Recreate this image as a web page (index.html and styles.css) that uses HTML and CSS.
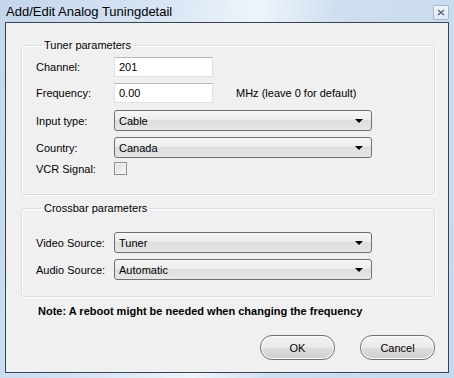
FILE: index.html
```html
<!DOCTYPE html>
<html lang="en">
<head>
    <meta charset="UTF-8">
    <title>Add/Edit Analog Tuningdetail</title>
    <link rel="stylesheet" href="styles.css">
</head>
<body>
    <div class="window">
        <div class="titlebar">
            <span class="title">Add/Edit Analog Tuningdetail</span>
            <span class="close-btn">
                <svg width="8" height="7" viewBox="0 0 8 7">
                    <path d="M1 1 L7 6 M7 1 L1 6" stroke="#5a6b80" stroke-width="1.6" fill="none"/>
                </svg>
            </span>
        </div>

        <div class="client">
            <fieldset class="group group-tuner">
                <legend>Tuner parameters</legend>
                <div class="row">
                    <label>Channel:</label>
                    <div class="textbox">201</div>
                </div>
                <div class="row">
                    <label>Frequency:</label>
                    <div class="textbox">0.00</div>
                    <span class="hint">MHz (leave 0 for default)</span>
                </div>
                <div class="row row-select first-select">
                    <label>Input type:</label>
                    <div class="select">Cable<span class="arrow"></span></div>
                </div>
                <div class="row row-select">
                    <label>Country:</label>
                    <div class="select">Canada<span class="arrow"></span></div>
                </div>
                <div class="row row-check">
                    <label>VCR Signal:</label>
                    <span class="checkbox"></span>
                </div>
            </fieldset>

            <fieldset class="group group-crossbar">
                <legend>Crossbar parameters</legend>
                <div class="row row-select">
                    <label>Video Source:</label>
                    <div class="select">Tuner<span class="arrow"></span></div>
                </div>
                <div class="row row-select">
                    <label>Audio Source:</label>
                    <div class="select">Automatic<span class="arrow"></span></div>
                </div>
            </fieldset>

            <p class="note">Note: A reboot might be needed when changing the frequency</p>

            <div class="buttons">
                <button class="btn">OK</button>
                <button class="btn">Cancel</button>
            </div>
        </div>
    </div>
</body>
</html>
```

FILE: styles.css
```css
* {
    margin: 0;
    padding: 0;
    box-sizing: border-box;
}

body {
    font-family: "Liberation Sans", Arial, sans-serif;
    font-size: 11px;
    color: #000;
    background: #fff;
}

.window {
    width: 454px;
    height: 378px;
    padding: 0 5px 5px 5px;
    background: linear-gradient(100deg, #c3d6ec 0%, #d6e4f3 30%, #eef4fa 50%, #cfdff0 65%, #c6d9ee 100%);
}

.titlebar {
    height: 22px;
    display: flex;
    align-items: center;
    justify-content: space-between;
}

.title {
    font-size: 13px;
    color: #000;
    padding-left: 1px;
    padding-top: 1px;
}

.close-btn {
    width: 16px;
    height: 15px;
    margin-top: 2px;
    border: 1px solid #a6b7cc;
    border-radius: 2px;
    background: linear-gradient(#f4f7fb, #dfe7f1);
    display: flex;
    align-items: center;
    justify-content: center;
}

.client {
    height: 351px;
    border: 1px solid #3a4452;
    background: #f0f0f0;
    padding: 15px 13px 0 15px;
}

.group {
    border: 1px solid #d5dfe5;
    box-shadow: inset 1px 1px 0 #fff, 1px 1px 0 #fff;
    border-radius: 3px;
    padding: 5px 0 0 14px;
    display: flex;
    flex-direction: column;
    gap: 6px;
}

.group legend {
    margin-left: 6px;
    padding: 0 2px;
    line-height: 14px;
}

.group-tuner {
    height: 157px;
}

.group-crossbar {
    margin-top: 6px;
    height: 96px;
    padding-top: 17px;
}

.row {
    display: flex;
    align-items: center;
    height: 20px;
}

.row label {
    width: 78px;
}

.row-select {
    height: 21px;
}

.first-select {
    margin-top: 1px;
}

.row-check {
    height: 13px;
    margin-top: -2px;
}

.textbox {
    width: 99px;
    height: 20px;
    background: #fff;
    border: 1px solid #dde2e8;
    border-top-color: #b5b8be;
    padding: 2px 4px;
    line-height: 14px;
}

.hint {
    margin-left: 23px;
}

.select {
    position: relative;
    width: 258px;
    height: 21px;
    border: 1px solid #707070;
    border-radius: 3px;
    background: linear-gradient(#f6f6f6 0%, #ececec 45%, #dedede 50%, #e6e6e6 100%);
    padding: 3px 4px;
    line-height: 14px;
}

.arrow {
    position: absolute;
    right: 8px;
    top: 8px;
    width: 0;
    height: 0;
    border-left: 4px solid transparent;
    border-right: 4px solid transparent;
    border-top: 4px solid #000;
}

.checkbox {
    width: 13px;
    height: 13px;
    border: 1px solid #8f8f8f;
    background: linear-gradient(135deg, #dcdcdc, #f8f8f8);
    box-shadow: inset 0 0 0 1px #f4f4f4;
}

.note {
    font-weight: bold;
    margin-top: 7px;
    padding-left: 17px;
    line-height: 14px;
}

.buttons {
    display: flex;
    justify-content: flex-end;
    gap: 25px;
    margin-top: 17px;
}

.btn {
    width: 75px;
    height: 25px;
    border: 1px solid #707070;
    border-radius: 12px;
    background: linear-gradient(#f2f2f2 0%, #ebebeb 48%, #dddddd 52%, #cfcfcf 100%);
    box-shadow: inset 0 0 0 1px #fbfbfb;
    font-family: "Liberation Sans", Arial, sans-serif;
    font-size: 11px;
    color: #000;
}
```
